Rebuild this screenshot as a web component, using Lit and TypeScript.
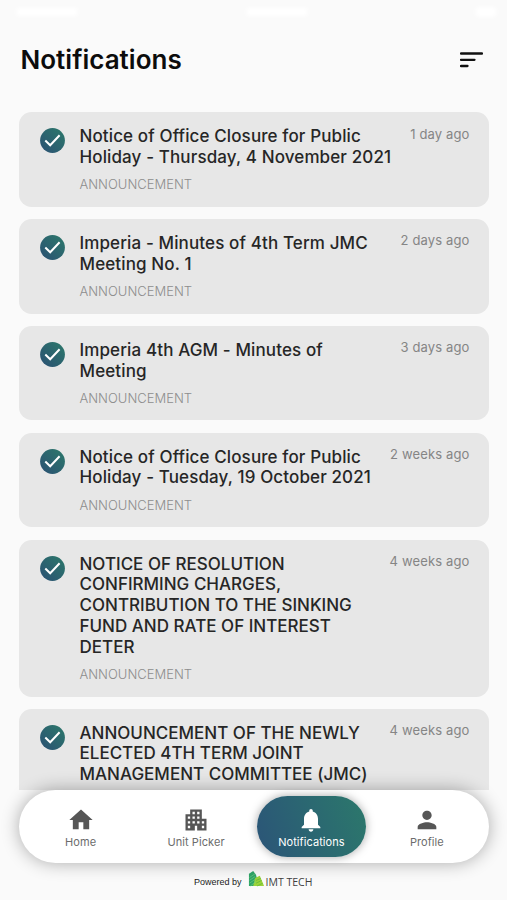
import { LitElement, html, css, svg, nothing } from "lit";
import { customElement, property } from "lit/decorators.js";
import { classMap } from "lit/directives/class-map.js";

interface Notice {
  lines: string[];
  age: string;
  kind?: string;
}

const NOTICES: Notice[] = [
  { lines: ["Notice of Office Closure for Public", "Holiday - Thursday, 4 November 2021"], age: "1 day ago", kind: "ANNOUNCEMENT" },
  { lines: ["Imperia - Minutes of 4th Term JMC", "Meeting No. 1"], age: "2 days ago", kind: "ANNOUNCEMENT" },
  { lines: ["Imperia 4th AGM - Minutes of", "Meeting"], age: "3 days ago", kind: "ANNOUNCEMENT" },
  { lines: ["Notice of Office Closure for Public", "Holiday - Tuesday, 19 October 2021"], age: "2 weeks ago", kind: "ANNOUNCEMENT" },
  {
    lines: ["NOTICE OF RESOLUTION", "CONFIRMING CHARGES,", "CONTRIBUTION TO THE SINKING", "FUND AND RATE OF INTEREST", "DETER"],
    age: "4 weeks ago",
    kind: "ANNOUNCEMENT",
  },
  {
    lines: ["ANNOUNCEMENT OF THE NEWLY", "ELECTED 4TH TERM JOINT", "MANAGEMENT COMMITTEE (JMC)"],
    age: "4 weeks ago",
  },
];

const ICONS = {
  home: svg`<path d="M10 20v-6h4v6h5v-8h3L12 3 2 12h3v8z"/>`,
  building: svg`<path d="M17 11V3H7v4H3v14h8v-4h2v4h8V11h-4zM7 19H5v-2h2v2zm0-4H5v-2h2v2zm0-4H5V9h2v2zm4 4H9v-2h2v2zm0-4H9V9h2v2zm0-4H9V5h2v2zm4 8h-2v-2h2v2zm0-4h-2V9h2v2zm0-4h-2V5h2v2zm4 12h-2v-2h2v2zm0-4h-2v-2h2v2z"/>`,
  bell: svg`<path d="M12 22c1.1 0 2-.9 2-2h-4c0 1.100.890 2 2 2zm6-6v-5c0-3.070-1.640-5.640-4.500-6.320V4c0-.830-.670-1.500-1.500-1.500s-1.500.670-1.500 1.500v.680C7.630 5.360 6 7.920 6 11v5l-2 2v1h16v-1l-2-2z"/>`,
  person: svg`<path d="M12 12c2.210 0 4-1.790 4-4s-1.790-4-4-4-4 1.790-4 4 1.790 4 4 4zm0 2c-2.670 0-8 1.340-8 4v2h16v-2c0-2.660-5.330-4-8-4z"/>`,
};

@customElement("notice-card")
class NoticeCard extends LitElement {
  @property({ attribute: false }) notice!: Notice;

  static styles = css`
    :host {
      display: flex;
      flex: none;
      box-sizing: border-box;
      padding: 13.6px 19px 0 20.5px;
      height: var(--card-height);
      border-radius: 12.5px;
      background: #e7e7e7;
    }
    .check {
      flex: none;
      width: 25px;
      height: 25px;
      margin: 2.2px 15px 0 0;
    }
    .body {
      flex: 1;
      white-space: nowrap;
    }
    .title {
      font-size: 17px;
      font-weight: 500;
      line-height: 20.75px;
      letter-spacing: 0.12px;
      color: #262626;
    }
    .caps {
      letter-spacing: 0.01px;
    }
    .line {
      display: block;
    }
    .kind {
      margin-top: 9px;
      font-size: 13px;
      line-height: 16px;
      color: #8d8d8d;
      font-weight: 300;
    }
    .age {
      margin-top: -0.4px;
      font-size: 13px;
      line-height: 16px;
      letter-spacing: 0.14px;
      color: #858585;
      white-space: nowrap;
    }
  `;

  render() {
    const caps = this.notice.lines.every((l) => l === l.toUpperCase());
    return html`
      <svg class="check" viewBox="0 0 25 25">
        <defs>
          <linearGradient id="disc" x1="0" y1="1" x2="1" y2="0">
            <stop offset="0.15" stop-color="#2b5672" />
            <stop offset="0.9" stop-color="#2c756b" />
          </linearGradient>
        </defs>
        <circle cx="12.500" cy="12.500" r="12.400" fill="url(#disc)" />
        <path d="M5.300 12.500 10.200 17.300 19.600 7.300" fill="none" stroke="#fff" stroke-width="2" />
      </svg>
      <div class="body">
        <div class=${classMap({ title: true, caps })}>
          ${this.notice.lines.map((l) => html`<span class="line">${l}</span>`)}
        </div>
        ${this.notice.kind ? html`<div class="kind">${this.notice.kind}</div>` : nothing}
      </div>
      <div class="age">${this.notice.age}</div>
    `;
  }
}

@customElement("nav-item")
class NavItem extends LitElement {
  @property() icon: keyof typeof ICONS = "home";
  @property() label = "";
  @property({ type: Boolean }) active = false;

  static styles = css`
    :host {
      display: flex;
      justify-content: center;
    }
    .item {
      display: flex;
      flex-direction: column;
      align-items: center;
      box-sizing: border-box;
      width: 109px;
      height: 61.5px;
      padding-top: 10.5px;
      border-radius: 31px;
      color: #6c6c6c;
      fill: #565656;
    }
    .active {
      color: #fff;
      fill: #fff;
      background: linear-gradient(70deg, #2b5677 5%, #2b6c70 65%, #2c786b);
      box-shadow: 0 0 10px rgba(0, 0, 0, 0.35);
    }
    .icon {
      width: 28px;
      height: 28px;
    }
    .label {
      margin-top: 0.5px;
      font-size: 11px;
      line-height: 14px;
      letter-spacing: 0.07px;
    }
  `;

  render() {
    return html`<div class=${classMap({ item: true, active: this.active })}>
      <svg class="icon" viewBox="0 0 24 24">${ICONS[this.icon]}</svg>
      <span class="label">${this.label}</span>
    </div>`;
  }
}

@customElement("app-root")
class AppRoot extends LitElement {
  static styles = css`
    :host {
      display: flex;
      flex-direction: column;
      box-sizing: border-box;
      height: 900px;
      overflow: hidden;
      background: #fafafa;
      font-family: Inter, "Liberation Sans", sans-serif;
    }
    .status {
      display: flex;
      align-items: center;
      justify-content: space-between;
      flex: none;
      height: 24px;
      padding: 0 10px 0 16px;
    }
    .glow {
      width: 62px;
      height: 8px;
      border-radius: 5px;
      background: #fff;
      filter: blur(2px);
    }
    .battery {
      width: 22px;
      height: 10px;
    }
    .header {
      display: flex;
      align-items: center;
      justify-content: space-between;
      box-sizing: border-box;
      flex: none;
      height: 88.4px;
      padding: 0 24px 16px 20.5px;
    }
    .heading {
      margin: 0;
      font-size: 26px;
      font-weight: 600;
      line-height: 32px;
      letter-spacing: 0.02px;
      color: #0c0c0c;
    }
    .sort {
      width: 23px;
      height: 16px;
      margin-top: -1px;
    }
    .list {
      display: flex;
      flex-direction: column;
      flex: none;
      gap: 12.6px;
      height: 677.600px;
      padding: 0 18.5px 0 19px;
      overflow: hidden;
    }
    .nav {
      display: grid;
      grid-template-columns: repeat(4, 115.4px);
      justify-content: center;
      flex: none;
      box-sizing: border-box;
      height: 73.500px;
      margin: 0 18.5px 0 19px;
      padding-top: 5.800px;
      border-radius: 37px;
      background: #fff;
      box-shadow: 0 0 18px rgba(0, 0, 0, 0.32);
      position: relative;
    }
    .footer {
      display: flex;
      align-items: center;
      flex: none;
      height: 36.5px;
      padding-left: 194px;
      white-space: nowrap;
    }
    .powered {
      font-family: "Liberation Sans", sans-serif;
      font-size: 9px;
      color: #222;
      margin-right: 6px;
    }
    .logo {
      width: 17px;
      height: 17px;
      margin-top: -6px;
    }
    .brand {
      font-family: "Open Sans", sans-serif;
      font-size: 10.5px;
      color: #404040;
      margin-left: 1px;
    }
  `;

  render() {
    return html`
      <div class="status">
        <span class="glow"></span>
        <span class="glow"></span>
        <span class="glow battery"></span>
      </div>
      <header class="header">
        <h1 class="heading">Notifications</h1>
        <svg class="sort" viewBox="0 0 23 16">
          <path d="M1 1.500H22M1 7.800H14.500M1 14H7.500" stroke="#111" stroke-width="2.300" stroke-linecap="round" />
        </svg>
      </header>
      <main class="list">
        ${NOTICES.map(
          (n) => html`<notice-card .notice=${n} style="--card-height:${52.8 + n.lines.length * 20.75}px"></notice-card>`
        )}
      </main>
      <nav class="nav">
        <nav-item icon="home" label="Home"></nav-item>
        <nav-item icon="building" label="Unit Picker"></nav-item>
        <nav-item icon="bell" label="Notifications" active></nav-item>
        <nav-item icon="person" label="Profile"></nav-item>
      </nav>
      <footer class="footer">
        <span class="powered">Powered by</span>
        <svg class="logo" viewBox="0 0 17 18">
          <path d="M.5 4 5 1l3 4 3 12H.5z" fill="#2fa568" />
          <path d="M7 8.500 12 6l4.500 11H5z" fill="#9bd33a" />
          <path d="M1 8l6-4M1 11l6-4M1 14l6-4M2 17l6-5" stroke="#6fcf80" stroke-width=".7" />
          <path d="M8 11l5-2M8 14l6-3M9 17l6-3" stroke="#57b43d" stroke-width=".7" />
        </svg>
        <span class="brand">IMT TECH</span>
      </footer>
    `;
  }
}
